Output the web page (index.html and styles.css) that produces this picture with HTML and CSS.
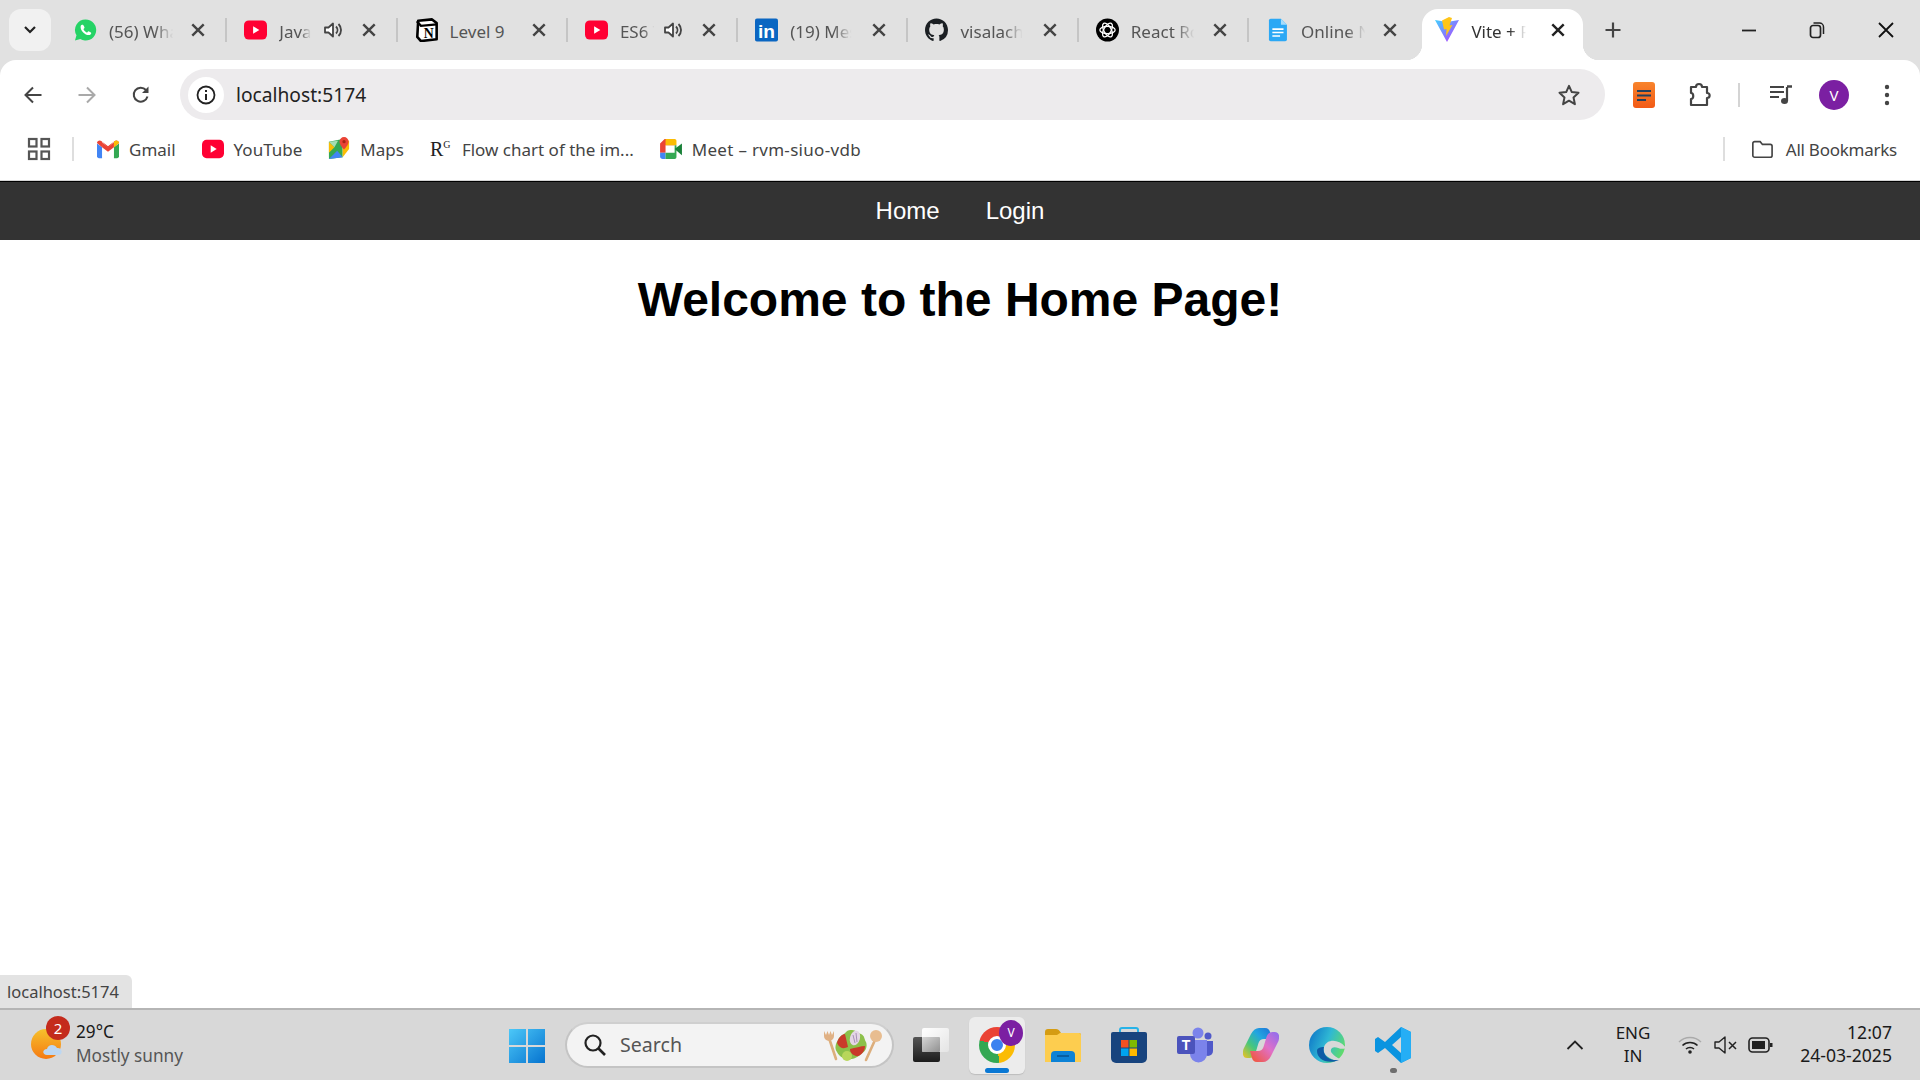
FILE: index.html
```html
<!DOCTYPE html>
<html lang="en">
<head>
<meta charset="utf-8">
<title>Vite + React</title>
<link rel="stylesheet" href="styles.css">
</head>
<body>
<svg class="defs" width="0" height="0" aria-hidden="true">
  <symbol id="yt" viewBox="0 0 24 20"><rect width="24" height="20" rx="5" fill="#ff0033"/><path d="M9.5 6l6.5 4-6.5 4z" fill="#fff"/></symbol>
  <symbol id="x" viewBox="0 0 14 14"><path d="M2 2l10 10M12 2L2 12" fill="none" stroke="currentColor" stroke-width="2.1"/></symbol>
  <symbol id="spk" viewBox="0 0 20 20"><path d="M2 7.5h3.5L10 3.5v13l-4.500-4H2z" fill="#fff" stroke="#444" stroke-width="1.800" stroke-linejoin="round"/><path d="M13 6.500c2 2 2 5 0 7M15.500 4c3.400 3.400 3.400 8.600 0 12" fill="none" stroke="#444" stroke-width="1.800"/></symbol>
  <linearGradient id="viteg" x1="0" y1="0" x2="1" y2="1"><stop offset="0" stop-color="#41d1ff"/><stop offset="1" stop-color="#bd34fe"/></linearGradient>
</svg>

<div class="chrome">
  <div class="tabstrip">
    <div class="tabmenu"><svg width="14" height="10" viewBox="0 0 14 10"><path d="M2 2l5 5 5-5" fill="none" stroke="#222" stroke-width="2.200"/></svg></div>
    <div class="tabs">
      <div class="tab">
        <svg class="fav" viewBox="0 0 24 24"><path d="M12 1a11 11 0 0 0-9.400 16.600L1 23l5.600-1.500A11 11 0 1 0 12 1z" fill="#25d366"/><path d="M8.300 6.500c-.5 0-1.400.8-1.400 2.500 0 3.600 4.500 8.300 8.500 8.300 1.500 0 2.600-1 2.600-2.200 0-.5-2.500-1.700-2.900-1.700-.5 0-.9 1.200-1.400 1.200-.9 0-3.700-2.600-3.700-3.500 0-.5 1-1 1-1.500 0-.4-1.200-3.100-1.700-3.100z" fill="#fff"/></svg>
        <span class="title fade">(56) Wha</span>
        <svg class="close"><use href="#x"/></svg>
      </div>
      <i class="sep"></i>
      <div class="tab">
        <svg class="fav"><use href="#yt"/></svg>
        <span class="title fade-short">Javat</span>
        <svg class="spk"><use href="#spk"/></svg>
        <svg class="close close-after"><use href="#x"/></svg>
      </div>
      <i class="sep"></i>
      <div class="tab">
        <svg class="fav" viewBox="0 0 24 26"><path d="M3 3L18 1.500l5 4v17.500l-17 2-4-4.500z" fill="#fff" stroke="#000" stroke-width="2.800" stroke-linejoin="round"/><path d="M1.500 3.500l4.500 5L23 7" fill="none" stroke="#000" stroke-width="2.400"/><text x="14.500" y="22" class="notion-n">N</text></svg>
        <span class="title">Level 9</span>
        <svg class="close"><use href="#x"/></svg>
      </div>
      <i class="sep"></i>
      <div class="tab">
        <svg class="fav"><use href="#yt"/></svg>
        <span class="title fade-short">ES6 T</span>
        <svg class="spk"><use href="#spk"/></svg>
        <svg class="close close-after"><use href="#x"/></svg>
      </div>
      <i class="sep"></i>
      <div class="tab">
        <svg class="fav" viewBox="0 0 24 24"><rect width="24" height="24" rx="2" fill="#0a66c2"/><text x="12" y="20" class="li-in">in</text></svg>
        <span class="title fade">(19) Mes</span>
        <svg class="close"><use href="#x"/></svg>
      </div>
      <i class="sep"></i>
      <div class="tab">
        <svg class="fav" viewBox="0 0 16 16"><path fill="#1b1f23" d="M8 0C3.580 0 0 3.580 0 8c0 3.540 2.290 6.530 5.470 7.590.4.070.55-.17.55-.38 0-.19-.01-.82-.01-1.490-2.010.37-2.530-.49-2.690-.94-.09-.23-.48-.94-.82-1.130-.28-.15-.68-.52-.01-.53.63-.01 1.080.58 1.230.82.720 1.210 1.870.87 2.330.66.070-.52.28-.87.51-1.070-1.780-.2-3.640-.89-3.640-3.950 0-.87.31-1.590.82-2.150-.08-.2-.36-1.020.08-2.120 0 0 .67-.21 2.200.82.640-.18 1.320-.27 2-.27.68 0 1.360.09 2 .27 1.530-1.040 2.200-.82 2.200-.82.440 1.100.16 1.920.08 2.120.51.56.82 1.270.82 2.150 0 3.070-1.870 3.750-3.650 3.950.29.25.54.73.54 1.480 0 1.070-.01 1.930-.01 2.200 0 .21.15.46.55.38A8.013 8.013 0 0 0 16 8c0-4.420-3.580-8-8-8z"/></svg>
        <span class="title fade">visalachi</span>
        <svg class="close"><use href="#x"/></svg>
      </div>
      <i class="sep"></i>
      <div class="tab">
        <svg class="fav" viewBox="0 0 24 24"><circle cx="12" cy="12" r="12" fill="#000"/><g fill="none" stroke="#fff" stroke-width="1.300"><ellipse cx="12" cy="12" rx="8" ry="3.800"/><ellipse cx="12" cy="12" rx="8" ry="3.800" transform="rotate(60 12 12)"/><ellipse cx="12" cy="12" rx="8" ry="3.800" transform="rotate(120 12 12)"/></g></svg>
        <span class="title fade">React Ro</span>
        <svg class="close"><use href="#x"/></svg>
      </div>
      <i class="sep"></i>
      <div class="tab">
        <svg class="fav" viewBox="0 0 24 28"><path d="M2 3a2 2 0 0 1 2-2h12l7 7v17a2 2 0 0 1-2 2H4a2 2 0 0 1-2-2z" fill="#2ba8f5"/><path d="M16 1l7 7h-7z" fill="#a6dcfb"/><path d="M6 13h13M6 17h13M6 21h9" stroke="#fff" stroke-width="1.800"/></svg>
        <span class="title fade">Online N</span>
        <svg class="close"><use href="#x"/></svg>
      </div>
      <div class="tab tab-active">
        <svg class="fav fav-vite" viewBox="0 0 24 26"><path d="M0 3l12 2 12-2-12 22z" fill="url(#viteg)"/><path d="M14 0L7 3.500l2 9 2.500-.5-.5 7 6.500-11-3 .5L17 1z" fill="#ffc517"/></svg>
        <span class="title title-active fade">Vite + R</span>
        <svg class="close close-active"><use href="#x"/></svg>
      </div>
    </div>
    <svg class="newtab" width="18" height="18" viewBox="0 0 18 18"><path d="M9 1.500v15M1.500 9h15" stroke="#444" stroke-width="2.200"/></svg>
    <div class="winctl">
      <svg width="16" height="16" viewBox="0 0 16 16"><path d="M1 8.500h14" stroke="#222" stroke-width="1.800"/></svg>
      <svg width="16" height="18" viewBox="0 0 16 18"><rect x="1.500" y="4.500" width="10" height="12" rx="2.500" fill="none" stroke="#222" stroke-width="1.700"/><path d="M4.500 2h6a4 4 0 0 1 4 4v7" fill="none" stroke="#222" stroke-width="1.500"/></svg>
      <svg width="18" height="18" viewBox="0 0 18 18"><path d="M2 2l14 14M16 2L2 16" stroke="#111" stroke-width="1.800"/></svg>
    </div>
  </div>

  <div class="toolbar">
    <div class="navbtns">
      <svg width="20" height="20" viewBox="0 0 20 20"><path d="M18.500 10H3M10 2.500L2.500 10l7.500 7.500" fill="none" stroke="#444" stroke-width="2"/></svg>
      <svg width="20" height="20" viewBox="0 0 20 20"><path d="M1.500 10H17M10 2.500l7.500 7.500-7.500 7.500" fill="none" stroke="#a9a9a9" stroke-width="2"/></svg>
      <svg width="20" height="20" viewBox="0 0 20 20"><path d="M16.500 11.500a7 7 0 1 1-1.500-6.500" fill="none" stroke="#444" stroke-width="2"/><path d="M17.500 1.500v6.500h-6.500z" fill="#444"/></svg>
    </div>
    <div class="omnibox">
      <span class="siteinfo"><svg width="20" height="20" viewBox="0 0 20 20"><circle cx="10" cy="10" r="8.500" fill="none" stroke="#222" stroke-width="1.800"/><path d="M10 9v6M10 5v2" stroke="#222" stroke-width="2"/></svg></span>
      <span class="url">localhost:5174</span>
      <svg class="star" width="24" height="24" viewBox="0 0 24 24"><path d="M12 2.800l2.800 6.300 6.700.7-5 4.600 1.400 6.800-5.900-3.500-5.900 3.500 1.400-6.800-5-4.600 6.700-.7z" fill="none" stroke="#444" stroke-width="2" stroke-linejoin="round"/></svg>
    </div>
    <div class="tools">
      <svg class="t-ext" width="22" height="26" viewBox="0 0 22 26"><defs><linearGradient id="extg" x1="0" y1="0" x2="0" y2="1"><stop offset="0" stop-color="#f8842c"/><stop offset="1" stop-color="#f25a16"/></linearGradient></defs><rect width="22" height="26" rx="3" fill="url(#extg)"/><path d="M4 9h14M4 13.500h14M4 18h9" stroke="#24405c" stroke-width="2"/></svg>
      <svg class="t-puzzle" width="26" height="26" viewBox="0 0 26 26"><path d="M4 5h5c0-4 6-4 6 0h5v6c3.500 0 3.500 5 0 5v7H4v-6c3 0 3-6 0-6z" fill="none" stroke="#444" stroke-width="2.200" stroke-linejoin="round"/></svg>
      <i class="t-sep"></i>
      <svg class="t-media" width="24" height="22" viewBox="0 0 24 22"><path d="M1 3h14M1 8h14M1 13h9" stroke="#444" stroke-width="2"/><path d="M18 3v14" stroke="#444" stroke-width="2.200"/><path d="M18 2.500h5" stroke="#444" stroke-width="2.500"/><ellipse cx="15.500" cy="17" rx="3.500" ry="3" fill="#444"/></svg>
      <span class="avatar">V</span>
      <svg class="t-dots" width="6" height="22" viewBox="0 0 6 22"><circle cx="3" cy="3" r="2.200" fill="#444"/><circle cx="3" cy="11" r="2.200" fill="#444"/><circle cx="3" cy="19" r="2.200" fill="#444"/></svg>
    </div>
  </div>

  <div class="bookmarks">
    <svg class="apps" width="24" height="24" viewBox="0 0 24 24"><g fill="none" stroke="#555" stroke-width="2.200"><rect x="2" y="2" width="7.500" height="7.500"/><rect x="14.500" y="2" width="7.500" height="7.500"/><rect x="2" y="14.500" width="7.500" height="7.500"/><rect x="14.500" y="14.500" width="7.500" height="7.500"/></g></svg>
    <i class="b-sep"></i>
    <div class="bm-list">
      <a class="bm"><svg viewBox="0 0 24 20"><path d="M0 4v14a2 2 0 0 0 2 2h3.500V8z" fill="#4285f4"/><path d="M24 4v14a2 2 0 0 1-2 2h-3.500V8z" fill="#34a853"/><path d="M0 3.500C0 1 3 0 5 1.500L12 7l7-5.500C21 0 24 1 24 3.500l-5.500 4.500V2L12 9 5.500 2v6z" fill="#ea4335"/><path d="M5.500 2.500V8L12 13l6.500-5V2.500L12 8z" fill="#ea4335"/><path d="M24 3.500C24 1 21 0 19 1.500l-.5.500V8z" fill="#fbbc04"/></svg>Gmail</a>
      <a class="bm"><svg><use href="#yt"/></svg>YouTube</a>
      <a class="bm"><svg viewBox="0 0 24 26"><path d="M1 5l15-3v20L1 24z" fill="#34a853"/><path d="M1 24l9-9 6 7z" fill="#4285f4"/><path d="M1 5l6 6-6 6z" fill="#fbbc04"/><path d="M1 5l6 6 4-7z" fill="#a6dcb2"/><path d="M16 2l7 2v9l-7 9z" fill="#fbbc04"/><path d="M17.500 0a5 5 0 0 0-5 5c0 3.500 5 8.500 5 8.500s5-5 5-8.500a5 5 0 0 0-5-5z" fill="#ea4335"/><circle cx="17.500" cy="5" r="1.800" fill="#a52714"/></svg>Maps</a>
      <a class="bm"><span class="rg">R<sup>G</sup></span>Flow chart of the im...</a>
      <a class="bm bm-meet"><svg viewBox="0 0 24 22"><path d="M5 0h11v7H6v8H0V5z" fill="#ea4335"/><path d="M0 15v4a3 3 0 0 0 3 3h3v-7z" fill="#4285f4"/><path d="M6 0h10a2 2 0 0 1 2 2v5h-2V7H6z" fill="#fbbc04"/><path d="M6 15h10V7h2v13a2 2 0 0 1-2 2H6z" fill="#34a853"/><path d="M16 11l8-6v13z" fill="#188038"/></svg>Meet – rvm-siuo-vdb</a>
    </div>
    <i class="b-sep b-sep-right"></i>
    <a class="bm bm-all"><svg viewBox="0 0 24 20"><path d="M2 4a2 2 0 0 1 2-2h6l2.500 3H21a2 2 0 0 1 2 2v10a2 2 0 0 1-2 2H4a2 2 0 0 1-2-2z" fill="none" stroke="#444" stroke-width="1.800"/></svg>All Bookmarks</a>
  </div>
</div>

<div class="page">
  <nav class="sitenav"><a>Home</a><a>Login</a></nav>
  <h1 class="welcome">Welcome to the Home Page!</h1>
  <div class="statusbubble">localhost:5174</div>
</div>

<footer class="taskbar">
  <div class="weather">
    <span class="w-icon">
      <svg width="38" height="36" viewBox="0 0 38 36"><defs><linearGradient id="sun" x1="0" y1="0" x2="0" y2="1"><stop offset="0" stop-color="#f6c12c"/><stop offset="1" stop-color="#f57a13"/></linearGradient></defs><circle cx="16" cy="18" r="15" fill="url(#sun)"/><path d="M17 29c-5 0-5-6 0-6 1-5 8-5 10-1 5-1 7 7 1 7z" fill="#bcd7f2"/></svg>
      <b class="badge">2</b>
    </span>
    <div class="w-text"><span class="w-temp">29°C</span><span class="w-cond">Mostly sunny</span></div>
  </div>
  <svg class="start" width="36" height="36" viewBox="0 0 36 36"><defs><linearGradient id="win" x1="0" y1="0" x2="1" y2="1"><stop offset="0" stop-color="#4cc8f8"/><stop offset="1" stop-color="#0673cf"/></linearGradient></defs><path d="M0 1h17v16H0zM19 1h17v16H19zM0 19h17v16H0zM19 19h17v16H19z" fill="url(#win)"/></svg>
  <div class="searchbox">
    <svg width="24" height="24" viewBox="0 0 24 24"><circle cx="10" cy="10" r="7.500" fill="none" stroke="#222" stroke-width="2.200"/><path d="M15.500 15.500l6.500 6.500" stroke="#222" stroke-width="2.600"/></svg>
    <span class="s-label">Search</span>
    <svg class="salad" width="62" height="34" viewBox="0 0 62 34">
      <path d="M9 10l7 21M55 12l-9 20" stroke="#dcae7c" stroke-width="2.600" stroke-linecap="round"/>
      <path d="M4 3v5a5 5 0 0 0 10 0V3l-2 4-1.500-4-1.500 4-1.500-4-1.500 4z" fill="#e0b184"/>
      <circle cx="56" cy="8" r="6" fill="#e8bd90"/>
      <path d="M32 2c4 0 5 3 9 4 4 2 3 5 5 8 2 5-1 10-5 12-3 3-8 6-13 5-5 0-9-3-11-7-3-4-1-9 1-12 2-5 6-5 8-8 2-2 4-2 6-2z" fill="#8cc04a"/>
      <path d="M17 15c1-5 5-9 8-9l3 13c-4 2-8 2-11-4zM30 21c5-1 11-3 15-3 0 6-5 11-9 10-3-1-6-3-6-7z" fill="#c93a2a"/>
      <ellipse cx="35" cy="10" rx="5" ry="7.500" fill="#e4d6e6" transform="rotate(15 35 10)"/>
      <path d="M33 7l2 8M36 5l1 9" stroke="#a98fb8" stroke-width="1"/>
      <circle cx="27" cy="28" r="5" fill="#b8d65a"/>
    </svg>
  </div>
  <div class="apps-row">
    <div class="slot"><svg width="36" height="34" viewBox="0 0 36 34"><defs><linearGradient id="tv1" x1="0" y1="0" x2="0" y2="1"><stop offset="0" stop-color="#555"/><stop offset="1" stop-color="#1c1c1c"/></linearGradient><linearGradient id="tv2" x1="0" y1="0" x2="1" y2="1"><stop offset="0" stop-color="#fff"/><stop offset="1" stop-color="#e4e4e4"/></linearGradient><linearGradient id="tv3" x1="0" y1="0" x2="1" y2="1"><stop offset="0" stop-color="#d6d6d6"/><stop offset="1" stop-color="#909090"/></linearGradient></defs><rect x="0" y="9" width="27" height="25" rx="2" fill="url(#tv1)"/><rect x="9" y="0" width="27" height="24" rx="2" fill="url(#tv2)"/><rect x="9" y="9" width="18" height="15" rx="1" fill="url(#tv3)"/></svg></div>
    <div class="slot slot-on"><span class="chrome-logo"><span class="chrome-core"></span></span><span class="avatar avatar-sm">V</span><i class="running"></i></div>
    <div class="slot"><svg width="36" height="33" viewBox="0 0 36 33"><path d="M0 3a3 3 0 0 1 3-3h8c2 0 3 1 4 2.500L16 4h18a2 2 0 0 1 2 2v6H0z" fill="#d59c12"/><path d="M0 6h12l3-2h19a2 2 0 0 1 2 2v27H0z" fill="#fdcd4f"/><path d="M6 26a4 4 0 0 1 4-4h16a4 4 0 0 1 4 4v7H6z" fill="#0c82d6"/><path d="M12 27h12" stroke="#06508c" stroke-width="1.400"/></svg></div>
    <div class="slot"><svg width="36" height="36" viewBox="0 0 36 36"><path d="M9 8V3a2 2 0 0 1 2-2h14a2 2 0 0 1 2 2v5" fill="none" stroke="#27b3e8" stroke-width="2"/><path d="M0 7a2 2 0 0 1 2-2h32a2 2 0 0 1 2 2v24a5 5 0 0 1-5 5H5a5 5 0 0 1-5-5z" fill="#18447e"/><path d="M10 13h7.500v7.500H10z" fill="#f25022"/><path d="M18.500 13H26v7.500h-7.500z" fill="#7fba00"/><path d="M10 21.500h7.500V29H10z" fill="#00a4ef"/><path d="M18.500 21.500H26V29h-7.500z" fill="#ffb900"/></svg></div>
    <div class="slot"><svg width="36" height="36" viewBox="0 0 36 36"><circle cx="21" cy="6" r="5.500" fill="#7b83eb"/><circle cx="31" cy="9" r="3.500" fill="#5059c9"/><path d="M26 14h10v10a5 5 0 0 1-10 0z" fill="#5059c9"/><path d="M11 13h19v14a8.500 8.500 0 0 1-17 0z" fill="#7b83eb"/><rect x="0" y="9" width="18" height="18" rx="2" fill="#4b53bc"/><text x="9" y="23" class="teams-t">T</text></svg></div>
    <div class="slot"><svg width="36" height="36" viewBox="0 0 36 36"><defs><linearGradient id="cp1" x1="1" y1="0" x2="0" y2="1"><stop offset="0" stop-color="#1d6fd8"/><stop offset=".35" stop-color="#22a6e0"/><stop offset=".65" stop-color="#46c77c"/><stop offset="1" stop-color="#f4c21e"/></linearGradient><linearGradient id="cp3" x1="1" y1="0" x2="0" y2="1"><stop offset="0" stop-color="#8a6cf0"/><stop offset=".45" stop-color="#e070c8"/><stop offset="1" stop-color="#f2542c"/></linearGradient></defs><path d="M16 1h6c3 0 4.500 2 5 4l2 7h-8c-3 0-4.500 1.500-5.500 4l-3 10c-1 3-3 5-6 5H4C0 31-1 27 .5 22L8 7c2-4 5-6 8-6z" fill="url(#cp1)"/><path d="M20 35h-6c-3 0-4.500-2-5-4l-2-7h8c3 0 4.500-1.500 5.500-4l3-10c1-3 3-5 6-5h2C36 5 37 9 35.500 14L28 29c-2 4-5 6-8 6z" fill="url(#cp3)"/></svg></div>
    <div class="slot"><svg width="36" height="36" viewBox="0 0 36 36"><defs><linearGradient id="edg" x1="0" y1=".2" x2="1" y2=".6"><stop offset="0" stop-color="#0f78c8"/><stop offset=".5" stop-color="#2fb8d4"/><stop offset="1" stop-color="#62dc68"/></linearGradient></defs><circle cx="18" cy="18" r="18" fill="url(#edg)"/><path d="M37 21C31 12 18 11 15 20 13 27 18 31 32 36L38 36C22 28 20 24 23 21 27 18 31 24 37 21z" fill="#d8d8d8"/><path d="M8 24C8 32 18 38 30 33 20 34 13 28 15 20 11 20 8 21 8 24z" fill="#0d5ba6"/></svg></div>
    <div class="slot"><svg width="36" height="36" viewBox="0 0 36 36"><path d="M26 0l10 5v26l-10 5-16-15-7 5-3-2V12l3-2 7 5zM26 10l-9 8 9 8z" fill="#0a94e0"/><path d="M26 0l10 5v26l-10 5z" fill="#25aef5"/></svg><i class="open-dot"></i></div>
  </div>
  <div class="tray">
    <svg class="chev" width="18" height="10" viewBox="0 0 18 10"><path d="M1.500 9L9 1.500 16.500 9" fill="none" stroke="#222" stroke-width="1.800"/></svg>
    <div class="lang"><span>ENG</span><span>IN</span></div>
    <svg class="wifi" width="24" height="18" viewBox="0 0 24 18"><path d="M1 6c6-6 16-6 22 0" fill="none" stroke="#aaa" stroke-width="1.400"/><path d="M4.500 9.500c4-4 11-4 15 0M8 13c2.200-2 5.800-2 8 0" fill="none" stroke="#222" stroke-width="1.600"/><circle cx="12" cy="16" r="1.800" fill="#222"/></svg>
    <svg class="vol" width="24" height="18" viewBox="0 0 24 18"><path d="M1 6h4l6-5v16l-6-5H1z" fill="none" stroke="#222" stroke-width="1.400" stroke-linejoin="round"/><path d="M15 6l7 7M22 6l-7 7" stroke="#222" stroke-width="1.500"/></svg>
    <svg class="bat" width="25" height="16" viewBox="0 0 25 16"><rect x="1" y="1" width="20" height="14" rx="3.500" fill="none" stroke="#222" stroke-width="1.600"/><rect x="4" y="4" width="13" height="8" fill="#222"/><rect x="22" y="6" width="2.500" height="4" fill="#222"/></svg>
    <div class="clock"><span>12:07</span><span>24-03-2025</span></div>
  </div>
</footer>
</body>
</html>
```

FILE: styles.css
```css
* { box-sizing: border-box; }
html, body { margin: 0; padding: 0; height: 100%; }
body {
  width: 1920px;
  height: 1080px;
  overflow: hidden;
  display: flex;
  flex-direction: column;
  background: #fff;
  font-family: "Noto Sans", "Open Sans", sans-serif;
  color: #222;
}
.defs { position: absolute; }

/* browser chrome */
.chrome { background: #e1e1e1; }
.tabstrip { height: 60px; display: flex; align-items: flex-start; padding: 9px 0 0 9px; }
.tabmenu {
  width: 42px; height: 42px; border-radius: 12px; background: #f1f1f1;
  display: flex; align-items: center; justify-content: center; margin-right: 6px;
}
.tabs { display: flex; align-items: flex-start; width: 1526px; }
.tab {
  position: relative; width: 168.300px; height: 42px; flex: none;
  display: flex; align-items: center; padding: 0 19px 0 17px;
  font-size: 17px; color: #555;
}
.fav { width: 23px; height: 24px; flex: none; margin-right: 12px; }
.title { flex: none; white-space: nowrap; padding-top: 3px; }
.fade {
  -webkit-mask-image: linear-gradient(90deg, #000 65%, transparent 92%);
  mask-image: linear-gradient(90deg, #000 65%, transparent 92%);
}
.fade-short {
  -webkit-mask-image: linear-gradient(90deg, #000 55%, transparent 82%);
  mask-image: linear-gradient(90deg, #000 55%, transparent 82%);
}
.close { width: 16px; height: 16px; flex: none; color: #444; margin-left: auto; }
.close-after { margin-left: 18px; }
.spk { width: 20px; height: 20px; flex: none; margin-left: auto; }
.sep { width: 2px; height: 24px; margin-top: 9px; background: #c5c5c5; flex: none; }
.notion-n { font: 700 15px "Liberation Serif", serif; text-anchor: middle; }
.li-in { font: 700 20px "Liberation Sans", sans-serif; fill: #fff; text-anchor: middle; }
.tab-active {
  width: 161px; height: 51px; margin-left: 5px; padding: 0 17px 9px 13px;
  background: #fff; border-radius: 16px 16px 0 0; color: #333;
}
.tab-active::before, .tab-active::after {
  content: ""; position: absolute; bottom: 0; width: 16px; height: 16px;
}
.tab-active::before { left: -16px; background: radial-gradient(circle at 0 0, transparent 16px, #fff 16.500px); }
.tab-active::after { right: -16px; background: radial-gradient(circle at 100% 0, transparent 16px, #fff 16.500px); }
.fav-vite { width: 24px; height: 26px; margin-right: 12px; }
.close-active { color: #222; }
.newtab { margin: 12px 0 0 21px; flex: none; }
.winctl {
  margin-left: auto; height: 42px; padding-right: 25px; display: flex; align-items: center; gap: 52px;
}

.toolbar {
  height: 60px; background: #fff; border-radius: 16px 16px 0 0;
  display: flex; align-items: flex-start; padding-top: 9px;
}
.navbtns {
  width: 180px; height: 51px; flex: none; display: flex; align-items: center;
  gap: 34px; padding-left: 23px;
}
.omnibox {
  width: 1425px; height: 51px; flex: none; background: #edebed; border-radius: 26px;
  display: flex; align-items: center; padding: 0 24px 0 8px;
}
.siteinfo {
  width: 36px; height: 36px; border-radius: 50%; background: #fff;
  display: flex; align-items: center; justify-content: center; margin-right: 12px; flex: none;
}
.url { font-size: 19.200px; color: #222; }
.star { margin-left: auto; }
.tools { flex: 1; height: 51px; display: flex; align-items: center; padding-left: 28px; }
.t-ext { flex: none; }
.t-puzzle { margin-left: 32px; flex: none; }
.t-sep { width: 2px; height: 24px; background: #d4d4d4; margin-left: 25px; flex: none; }
.t-media { margin-left: 29px; flex: none; }
.avatar {
  width: 30px; height: 30px; border-radius: 50%; background: #7b1fa2; color: #fff;
  font-size: 15px; display: flex; align-items: center; justify-content: center; flex: none;
  margin-left: 26px;
}
.t-dots { margin-left: 35px; flex: none; }

.bookmarks {
  height: 61px; background: #fff; border-bottom: 1px solid #d4d4d4;
  display: flex; align-items: center; padding: 0 23px 2px 27px; font-size: 17px; color: #444;
}
.apps { flex: none; }
.b-sep { width: 2px; height: 24px; background: #dedede; flex: none; margin-left: 21px; }
.bm-list { display: flex; align-items: center; gap: 26px; margin-left: 23px; }
.bm { display: flex; align-items: center; gap: 10px; white-space: nowrap; }
.bm svg { width: 22px; height: 20px; flex: none; }
.bm-list .bm:nth-child(3) svg { height: 24px; }
.bm-meet { letter-spacing: .3px; }
.rg { width: 22px; font: 20px "Liberation Serif", serif; color: #222; flex: none; white-space: nowrap; }
.rg sup { font-size: 10px; line-height: 0; }
.b-sep-right { margin-left: auto; }
.bm-all { margin-left: 26px; gap: 13px; letter-spacing: -.25px; }

/* page */
.page { position: relative; flex: 1; background: #fff; font-family: "Liberation Sans", Arial, sans-serif; color: #000; }
.sitenav {
  height: 59px; background: #333; border-top: 1px solid #000;
  display: flex; align-items: center; justify-content: center; gap: 46px;
  color: #fff; font-size: 24px;
}
.welcome { margin: 32px 0; text-align: center; font-size: 48px; font-weight: 700; }
.statusbubble {
  position: absolute; left: 0; bottom: 0; width: 132px; height: 33px;
  background: #e3e3e3; border-top-right-radius: 6px; color: #444;
  font: 16.500px "Noto Sans", sans-serif; padding-left: 7px; line-height: 33px;
}

/* taskbar */
.taskbar {
  height: 72px; flex: none; background: #d8d8d8; border-top: 2px solid #b5b5b5;
  display: flex; align-items: center; position: relative;
}
.weather { width: 509px; display: flex; align-items: center; padding-left: 30px; flex: none; }
.w-icon { position: relative; width: 38px; height: 36px; margin-right: 8px; margin-bottom: 2px; flex: none; }
.badge {
  position: absolute; top: -10px; left: 16px; width: 24px; height: 24px; border-radius: 50%;
  background: #c42b1c; color: #fff; font-size: 15px; font-weight: 400;
  display: flex; align-items: center; justify-content: center;
}
.w-text { display: flex; flex-direction: column; gap: 1px; font-size: 17.200px; line-height: 23px; margin-bottom: 4px; }
.w-temp { color: #1a1a1a; }
.w-cond { color: #555; }
.start { flex: none; margin-top: 1px; }
.searchbox {
  width: 329px; height: 46px; margin-left: 20px; flex: none; background: #f3f3f3;
  border-radius: 23px; border: 2px solid #c4c4c4; border-top-color: #cfcfcf;
  display: flex; align-items: center; padding: 0 10px 0 16px; margin-bottom: 1px;
}
.s-label { font-size: 19.600px; color: #555; margin-left: 13px; }
.salad { margin-left: auto; }
.apps-row { display: flex; align-items: center; margin-left: 4px; flex: none; }
.slot { position: relative; width: 66px; height: 57px; display: flex; align-items: center; justify-content: center; flex: none; }
.slot-on { width: 56px; margin: 0 5px; background: #ececec; border-radius: 6px; box-shadow: 0 1px 1px #bdbdbd; }
.chrome-logo {
  width: 36px; height: 36px; border-radius: 50%; display: flex; align-items: center; justify-content: center;
  background: conic-gradient(#ea4335 0 88deg, #fbbc04 88deg 172deg, #34a853 172deg 285deg, #ea4335 285deg);
}
.chrome-core { width: 18px; height: 18px; border-radius: 50%; background: #3b82f0; border: 3px solid #fff; }
.avatar-sm {
  position: absolute; top: 3px; right: 2px; width: 24px; height: 26px; margin: 0; font-size: 12px;
}
.running { position: absolute; bottom: 1px; left: 16px; width: 24px; height: 5px; border-radius: 3px; background: #0a78d4; }
.open-dot { position: absolute; bottom: 1px; left: 30px; width: 7px; height: 5px; border-radius: 3px; background: #6e6e6e; }
.teams-t { font: 700 14px "Liberation Sans", sans-serif; fill: #fff; text-anchor: middle; }

.tray { flex: 1; display: flex; align-items: center; padding-left: 140px; font-size: 17px; color: #1a1a1a; }
.chev { flex: none; }
.lang { width: 44px; margin-left: 27px; display: flex; flex-direction: column; align-items: center; line-height: 23px; margin-bottom: 2px; }
.wifi { margin-left: 23px; flex: none; }
.vol { margin-left: 12px; flex: none; }
.bat { margin-left: 10px; flex: none; }
.clock { margin-left: auto; margin-right: 28px; display: flex; flex-direction: column; align-items: flex-end; line-height: 23px; font-size: 17.600px; margin-bottom: 2px; }
```
